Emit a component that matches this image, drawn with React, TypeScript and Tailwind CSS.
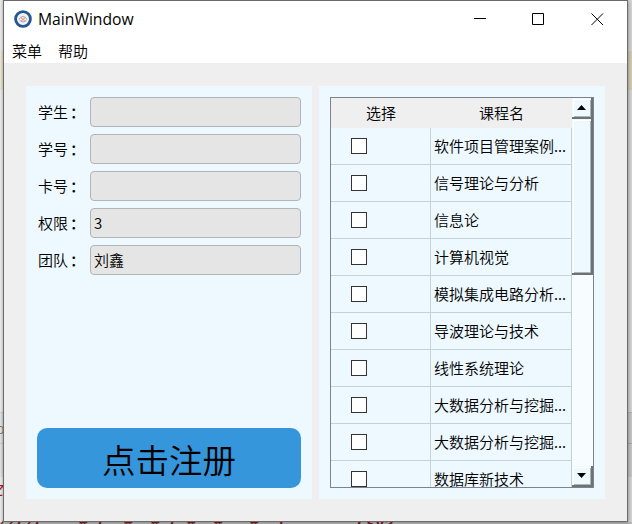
import React from "react";

const fields: [string, string][] = [
  ["学生", ""],
  ["学号", ""],
  ["卡号", ""],
  ["权限", "3"],
  ["团队", "刘鑫"],
];

const courses = [
  "软件项目管理案例...",
  "信号理论与分析",
  "信息论",
  "计算机视觉",
  "模拟集成电路分析...",
  "导波理论与技术",
  "线性系统理论",
  "大数据分析与挖掘...",
  "大数据分析与挖掘...",
  "数据库新技术",
];

const bevel =
  "border-r-2 border-b-2 border-[#6e7175] bg-[#edf8ff] shadow-[inset_1px_1px_0_#edf8ff,inset_2px_2px_0_#ffffff,inset_-1px_-1px_0_#a9b4bb]";

// What shows of the editor behind the window.
function Backdrop() {
  return (
    <div className="absolute inset-0 overflow-hidden bg-[#d8d8d8]">
      <div className="absolute inset-x-0 top-[51px] h-[39px] bg-[#d6cfb7]" />
      <div className="absolute inset-x-0 top-[412px] h-[65px] bg-[#c9c9c9]" />
      <div className="absolute inset-x-0 top-[412px] h-px bg-[#b5b5b5]" />
      <div className="absolute inset-x-0 top-[443px] h-px bg-[#aaaaaa]" />
      <div className="absolute inset-y-0 left-0 w-[3px] bg-linear-to-r from-white/50 to-transparent" />
      <div className="absolute inset-x-0 bottom-0 h-[2px] bg-[#bcbcbc]" />
      <span className="absolute -left-[4px] top-[421px] font-['Open_Sans',sans-serif] text-[14px] leading-4 text-[#555]">o</span>
      <span className="absolute -left-[6px] top-[484px] font-['Liberation_Mono',monospace] text-[16px] italic leading-4 text-[#a52020]">Z</span>
      <span className="absolute -left-[3px] top-[518px] whitespace-pre font-['Liberation_Mono',monospace] text-[15px] font-bold italic leading-4 text-[#7b2020]">{"//(/(    # (  #  # ( #  #   #  l        CSV?"}</span>
    </div>
  );
}

function Logo() {
  return (
    <svg className="h-[18px] w-[18px]" viewBox="0 0 19 19">
      <circle cx="9.5" cy="9.5" r="7.8" fill="#fff" stroke="#245791" strokeWidth="3" />
      <circle cx="9.5" cy="9.5" r="5.2" fill="#f1eef4" />
      <path d="M5.5 9.5c2-3.4 6-3.4 8 0M5.5 10c2 3.4 6 3.4 8 0" fill="none" stroke="#8c9fd0" strokeWidth=".9" />
      <path d="M6.5 7.5l5 4M12.5 7.5l-5 4" stroke="#e5a07b" strokeWidth="1.1" />
    </svg>
  );
}

function TitleBar() {
  return (
    <div className="flex h-9 items-center pl-[10px]">
      <Logo />
      <span className="ml-[6px] font-['Open_Sans',sans-serif] text-[15.7px] font-normal leading-5">MainWindow</span>
      <svg className="ml-auto mr-[23px] h-3 w-[130px]" viewBox="0 0 130 12" fill="none" stroke="#000">
        <path d="M0 5.5h12" />
        <path d="M58.5.5h11v11h-11z" />
        <path d="M117.5.5l11.5 11.5M129 .5L117.5 12" />
      </svg>
    </div>
  );
}

function Arrow({ down = false }: { down?: boolean }) {
  return (
    <svg className="h-[5px] w-[9px]" viewBox="0 0 9 5">
      <path d={down ? "M0 0h9L4.5 5z" : "M0 5h9L4.5 0z"} fill="#000" />
    </svg>
  );
}

function CourseTable() {
  return (
    <div className="flex h-[391px] w-[264px] border border-[#7b848c]">
      <div className="flex w-[241px] flex-col overflow-hidden">
        <div className="flex h-[30px] shrink-0 items-center bg-[#efefef]">
          <span className="w-[100px] text-center">选择</span>
          <span className="w-[141px] text-center">课程名</span>
        </div>
        {courses.map((course, i) => (
          <div key={i} className="flex h-[37px] shrink-0 border-b border-[#c5d0d7]">
            <div className="flex w-[100px] shrink-0 items-center border-r border-[#c5d0d7] pl-5">
              <span className="h-4 w-4 border border-[#333] bg-white" />
            </div>
            <div className="flex flex-1 items-center whitespace-nowrap border-r border-[#c5d0d7] pl-[3px]">{course}</div>
          </div>
        ))}
      </div>
      <div className="flex w-[21px] flex-col bg-[#f6fcff]">
        <div className={"flex h-[21px] items-center justify-center " + bevel}><Arrow /></div>
        <div className={"h-[156px] " + bevel} />
        <div className={"mt-auto flex h-[21px] items-center justify-center " + bevel}><Arrow down /></div>
      </div>
    </div>
  );
}

export default function App() {
  return (
    <div className="relative h-[524px] w-[632px] overflow-hidden font-['Noto_Sans_CJK_SC',sans-serif] text-[15px] font-[350] leading-[22px] text-black">
      <Backdrop />
      <div className="relative ml-[3px] flex h-[522px] w-[625px] flex-col border border-[#6b6b6b] bg-[#efefef] shadow-[1px_1px_4px_rgba(0,0,0,0.3)]">
        <div className="h-[62px] shrink-0 bg-white">
          <TitleBar />
          <div className="flex h-7 items-center gap-4 pl-2">
            <span>菜单</span>
            <span>帮助</span>
          </div>
        </div>
        <div className="flex gap-[7px] pl-[22px] pt-[23px]">
          <div className="flex h-[413px] w-[286px] flex-col bg-[#edf8ff] px-[11px] py-[11px]">
            <div className="flex flex-col gap-[7px]">
              {fields.map(([label, value]) => (
                <div key={label} className="flex h-[30px] items-center">
                  <span className="flex w-[53px] whitespace-nowrap pl-px">{label}<span className="pl-[2px] font-medium">：</span></span>
                  <div className="flex h-[30px] w-[211px] items-center rounded-[4px] border border-[#b2b5b7] bg-[#e5e5e5] pl-[3px]">{value}</div>
                </div>
              ))}
            </div>
            <button className="mt-auto h-[60px] w-[264px] rounded-[10px] bg-[#3696db] pt-px text-[33.5px] font-[350] leading-[50px]">点击注册</button>
          </div>
          <div className="h-[413px] w-[286px] bg-[#edf8ff] p-[11px]">
            <CourseTable />
          </div>
        </div>
      </div>
    </div>
  );
}
